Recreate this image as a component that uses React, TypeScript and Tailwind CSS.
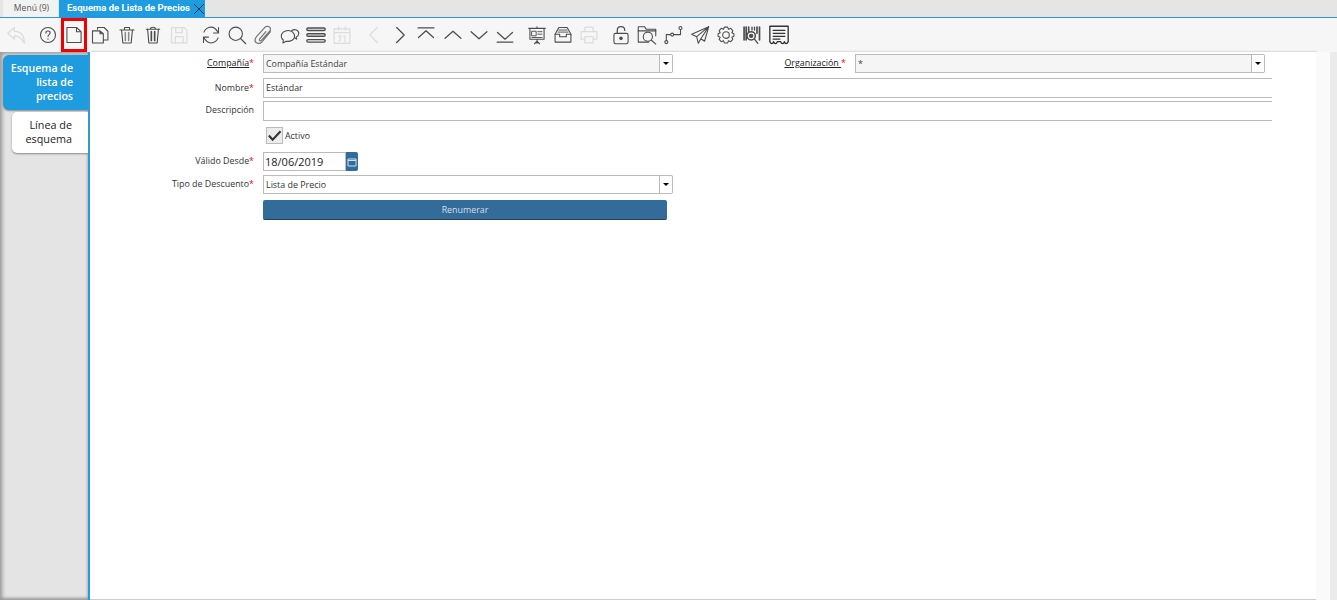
import type { ReactNode } from 'react'

const sans = "font-['Open_Sans',sans-serif]"

function Ico({ children, muted }: { children: ReactNode; muted?: boolean }) {
    return (
        <svg
            viewBox="0 0 24 24"
            className="w-5 h-5"
            fill="none"
            stroke={muted ? '#dcdcdc' : '#4d4d4d'}
            strokeWidth={muted ? 1.5 : 1.3}
            strokeLinecap="round"
            strokeLinejoin="round"
        >
            {children}
        </svg>
    )
}

const toolbar: { icon: ReactNode; muted?: boolean; gap?: boolean; active?: boolean }[] = [
    { muted: true, icon: <path d="M2 10 L10 3 V7.5 C17 7.5 22 12 22 22 C19 16 15 13 10 13 V17 Z" /> },
    { gap: true, icon: <><circle cx="12" cy="12" r="9" /><path d="M9.5 9.5 C9.5 6.5 14.5 6.5 14.5 9.5 C14.5 11.5 12 11.5 12 13.8" /><path d="M12 16.5 V17" /></> },
    { active: true, icon: <path d="M3.5 3 H15 L20.5 8 V21 H3.5 Z M15 3 V8 H20.5" /> },
    { icon: <><path d="M9 5 V3 H17 L21.5 7.5 V18 H16" /><path d="M3 7 H12 L16 10.5 V21.5 H3 Z M12 7 V10.5 H16" /></> },
    { icon: <><path d="M3.5 6 H20.5 M9 6 V3 H15 V6" /><path d="M5.5 6 L7 21.5 H17 L18.5 6" /><path d="M10 9 V18.5 M14 9 V18.5" strokeWidth="1.8" stroke="#888" /></> },
    { icon: <><path d="M4 5 H20 M9 5 C9 2 15 2 15 5" /><path d="M5.5 5 L7 21.5 H17 L18.5 5" /><path d="M10 8 V18.5 M14 8 V18.5" strokeWidth="2" /></> },
    { muted: true, icon: <><path d="M3 3 H18 L21.5 6.5 V21.5 H3 Z" /><path d="M8 3 V9 H16 V3 M7.5 21.5 V14 H17 V21.5" /></> },
    { gap: true, icon: <><path d="M20.5 9 C18.5 5 15 2.5 12 2.5 C8 2.5 4.5 5.5 3.5 8.5" /><path d="M21 3 V9.5 H15" /><path d="M3.5 15 C5.5 19 9 21.5 12 21.5 C16 21.5 19.5 18.5 20.5 15.5" /><path d="M3 21 V14.5 H9" /></> },
    { icon: <><circle cx="10.5" cy="10.5" r="8" /><path d="M16.5 16.5 L22.5 22.5" /></> },
    { icon: <path stroke="#777" strokeWidth="1.5" d="M21 8 L10.5 20.5 C8.5 23 3 22.5 2.5 19 C2.2 17 3 15.5 4 14.3 L14.5 2.5 C16 1 20 1.2 20.8 3.5 C21.3 5.3 20.8 6.5 20 7.5 L10 18.5 C9 19.5 7 18.7 7.8 17 L15.5 8" /> },
    { icon: <><path d="M14 7 C17 4 23 6 22.5 10.5 C22.3 12.5 21 14 19.5 14.5 L20 17 L17 15" /><path d="M10 6.5 C5 6.5 1.5 9.5 1.5 13.5 C1.5 15.5 2.5 17 4 18 L3.5 21.5 L7.5 19.5 C13 20.2 17.5 17.5 17.5 13.5 C17.5 9.5 14 6.5 10 6.5 Z" fill="#f5f5f5" /></> },
    { icon: <path strokeWidth="1.7" d="M1 5 C1 4 1.5 3.5 2.5 3.5 H21.5 C22.5 3.5 23 4 23 5 C23 6 22.5 6.5 21.5 6.5 H2.5 C1.5 6.5 1 6 1 5 Z M1 12 C1 11 1.5 10.5 2.5 10.5 H21.5 C22.5 10.5 23 11 23 12 C23 13 22.5 13.5 21.5 13.5 H2.5 C1.5 13.5 1 13 1 12 Z M1 19 C1 18 1.5 17.5 2.5 17.5 H21.5 C22.5 17.5 23 18 23 19 C23 20 22.5 20.5 21.5 20.5 H2.5 C1.5 20.5 1 20 1 19 Z" /> },
    { muted: true, icon: <><path d="M2.5 4.5 H21.5 V22 H2.5 Z M2.5 9 H21.5 M8 2 V6 M16 2 V6" /><path d="M8 13 H11 L9 16 C11 16 11 20 8 19 M14 14 L15.5 13 V20" strokeWidth="1.3" /></> },
    { gap: true, muted: true, icon: <path d="M16 3 L7 12 L16 21" /> },
    { icon: <path strokeWidth="1.5" d="M8 3 L17 12 L8 21" /> },
    { icon: <path strokeWidth="1.5" d="M2.5 3.5 H21.5 M3 15 L12 7 L21 15" /> },
    { icon: <path strokeWidth="1.5" d="M2.5 16 L12 7.5 L21.5 16" /> },
    { icon: <path strokeWidth="1.5" d="M2.5 8 L12 16.5 L21.5 8" /> },
    { icon: <path strokeWidth="1.5" d="M2.5 20.5 H21.5 M3 9 L12 17 L21 9" /> },
    { gap: true, icon: <><path d="M2 4 H22 M3.5 4 V17 H20.5 V4 M12 2 V4 M12 17 V22 M9 22.5 L12 19.5 L15 22.5" /><path d="M6 7.5 H11 V13 H6 Z M13 8 H18 M13 11 H18 M6 15 H18" strokeWidth="1.1" /></> },
    { icon: <><path d="M7 3 H17 L21.5 11 V20.5 H2.5 V11 Z" /><path d="M2.5 11 H8 V14 H16 V11 H21.5" /><path d="M7 6 H17 M6 8.5 H18" strokeWidth="1.1" /></> },
    { muted: true, icon: <><path d="M7 8 V2.5 H17 V8 M7 17 H2.5 V8 H21.5 V17 H17" /><path d="M7 14 H17 V21.5 H7 Z" /></> },
    { gap: true, icon: <><rect x="3.5" y="10" width="17" height="12.5" rx="2" /><path d="M7.5 10 V6.5 C7.5 0.5 16.5 0.5 16.5 6.5" strokeWidth="1.5" /><circle cx="12" cy="16" r="1.5" fill="#4d4d4d" /></> },
    { icon: <><path d="M14 20.5 H1.5 V2 H9 L11 5 H22.5 V13" /><path d="M1.5 7 H22.5" /><circle cx="13" cy="14" r="5.5" /><path d="M17 18 L22.5 23" /></> },
    { icon: <><circle cx="4" cy="20.5" r="1.8" /><circle cx="11" cy="11.5" r="1.8" /><circle cx="21" cy="3.5" r="1.8" /><path d="M4 18.5 V11.5 H9 M13 11.5 H21 V5.5" /></> },
    { icon: <path d="M22.5 2 L2 11 L8 14 L10 22 L13 16.5 L17.5 19.5 Z M22.5 2 L8 14 M22.5 2 L13 16.5" /> },
    { icon: <><circle cx="12" cy="12" r="4" /><path d="M10 2.5 H14 L15 5.2 L17.7 4 L20.2 6.8 L19 9.3 L21.5 10.5 V13.5 L19 14.7 L20.2 17.2 L17.7 20 L15 18.8 L14 21.5 H10 L9 18.8 L6.3 20 L3.8 17.2 L5 14.7 L2.5 13.5 V10.5 L5 9.3 L3.8 6.8 L6.3 4 L9 5.2 Z" /></> },
    { icon: <><path d="M2.5 2.5 V18 M5 2.5 V18 M8 2.5 V8 M18 2.5 V10 M21 2.5 V18" strokeWidth="2" /><path d="M12 2.5 V6 M15 2.5 V6" strokeWidth="1.6" /><circle cx="11" cy="13" r="5" strokeWidth="1.8" fill="#f5f5f5" /><circle cx="11" cy="13" r="2" fill="#4d4d4d" /><path d="M15 17 L19 22" strokeWidth="1.6" /></> },
    { icon: <><path strokeWidth="1.6" stroke="#333" d="M1 1.5 H23 V20 C21.5 23 19.5 23 18.5 20 C17.5 23 15 23 14 20 H10 C9 23 6.5 23 5.5 20 C4.5 23 2.5 23 1 20 Z" /><path stroke="#333" strokeWidth="1.5" d="M5 6.5 H19 M5 10 H19 M5 13.5 H19 M5 17 H13" /></> },
]

function Req() {
    return <span className="text-[#e0101a]">*</span>
}

function Label({ children }: { children: ReactNode }) {
    return <div className="w-[164px] shrink-0 text-right whitespace-nowrap text-[8.9px] text-[#333] leading-none">{children}</div>
}

function Combo({ value }: { value: string }) {
    return (
        <div className="flex h-[19px] w-[410px] shrink-0">
            <div className="flex-1 bg-[#f5f5f5] border border-[#bbbbbb] pl-[2px] text-[8.9px] leading-[17px] text-[#444]">{value}</div>
            <div className="w-[13px] border border-l-0 border-[#bbbbbb] rounded-r-[2px] bg-white flex items-center justify-center">
                <div className="w-0 h-0 border-x-[3px] border-x-transparent border-t-[3px] border-t-black" />
            </div>
        </div>
    )
}

export default function App() {
    return (
        <div className={`${sans} h-[600px] w-[1337px] overflow-hidden bg-white flex flex-col`}>
            {/* Tabs */}
            <div className="h-[18px] shrink-0 bg-[#e5e5e5] border-b border-[#2f95d0] flex items-stretch pl-[3px]">
                <div className="w-[55px] bg-[#f2f2f2] text-[#555] text-[8.6px] leading-[17px] text-center pl-[2px]">Menú (9)</div>
                <div className="ml-[1px] w-[146px] bg-[#1f9be0] flex items-center pl-[8px] text-white font-['Roboto',sans-serif] font-bold text-[9.5px]">
                    <span className="w-[126px] whitespace-nowrap">Esquema de Lista de Precios</span>
                    <svg viewBox="0 0 12 12" className="w-[12px] h-[12px]" stroke="#163a52" strokeWidth="1" fill="none">
                        <path d="M1 1 L11 11 M11 1 L1 11" />
                    </svg>
                </div>
            </div>

            {/* Toolbar */}
            <div className="h-[34px] shrink-0 bg-[#f6f6f6] flex items-stretch pl-[3px]">
                {toolbar.map((b, i) => (
                    <div
                        key={i}
                        className={`w-[26.35px] shrink-0 flex items-center justify-center ${b.gap ? 'ml-[5px]' : ''} ${b.active ? 'border-[3px] border-[#f00000]' : ''}`}
                    >
                        <Ico muted={b.muted}>{b.icon}</Ico>
                    </div>
                ))}
            </div>

            <div className="flex-1 flex min-h-0">
                {/* Side tabs */}
                <div className="w-[90px] shrink-0 bg-[#e4e4e4] border-r-2 border-[#1f9be0] shadow-[inset_2px_2px_4px_#999,inset_0_-2px_3px_#999] pt-[3px] flex flex-col items-end">
                    <div className="w-[85px] h-[55px] bg-[#1f9be0] rounded-l-[6px] pr-[15px] pt-[6px] text-right text-white text-[10.6px] font-semibold leading-[14px] shadow-[0_1px_2px_#888]">
                        Esquema de<br />lista de<br />precios
                    </div>
                    <div className="mt-[2px] w-[76px] h-[41px] bg-white rounded-l-[5px] pr-[16px] pt-[6px] text-right text-[#222] text-[10.8px] leading-[14px] shadow-[0_1px_2px_#888]">
                        Línea de<br />esquema
                    </div>
                </div>

                {/* Form panel */}
                <div className="w-[1226px] shrink-0 bg-white border-b border-[#ccc] shadow-[1px_0_2px_#aaa] pt-[2px] overflow-hidden">
                    <div className="flex items-center h-[19px]">
                        <Label><span className="underline text-[#222]">Compañía</span><Req /></Label>
                        <div className="w-[9px] shrink-0" />
                        <Combo value="Compañía Estándar" />
                        <div className="w-[9px] shrink-0" />
                        <Label><span className="underline text-[#222]">Organización&nbsp;</span><Req /></Label>
                        <div className="w-[9px] shrink-0" />
                        <Combo value="*" />
                    </div>

                    <div className="flex items-center mt-[5px] h-[20px]">
                        <Label>Nombre<Req /></Label>
                        <div className="w-[9px] shrink-0" />
                        <div className="w-[1009px] h-full border border-r-0 border-[#bbbbbb] pl-[2px] text-[8.9px] leading-[18px] text-[#333]">Estándar</div>
                    </div>

                    <div className="flex items-center mt-[3px] h-[20px]">
                        <Label><span className="relative bottom-[1px]">Descripción</span></Label>
                        <div className="w-[9px] shrink-0" />
                        <div className="w-[1009px] h-full border border-r-0 border-[#bbbbbb]" />
                    </div>

                    <div className="flex items-center mt-[5px] h-[18px] pl-[176px]">
                        <div className="w-[17px] h-[17px] bg-[#ececec] border border-[#bbb] flex items-center justify-center">
                            <svg viewBox="0 0 16 16" className="w-[15px] h-[15px]" fill="none" stroke="#333" strokeWidth="2.2">
                                <path d="M2 8 L6 12.5 L14.5 3.5" />
                            </svg>
                        </div>
                        <span className="ml-[2px] text-[8.9px] text-[#333] pt-[1px]">Activo</span>
                    </div>

                    <div className="flex items-center mt-[8px] h-[19px]">
                        <Label>Válido Desde<Req /></Label>
                        <div className="w-[9px] shrink-0" />
                        <div className="w-[83px] h-full border border-[#bbbbbb] pl-[1px] text-[11px] leading-[17px] text-[#222]">18/06/2019</div>
                        <div className="w-[12px] h-full bg-[#336b9b] rounded-r-[2px] flex items-center justify-center">
                            <svg viewBox="0 0 10 10" className="w-[10px] h-[10px]" fill="none" stroke="#cfe0ee" strokeWidth="1">
                                <path d="M1 2 H9 V9 H1 Z M1 3.5 H9" />
                            </svg>
                        </div>
                    </div>

                    <div className="flex items-center mt-[4px] h-[19px]">
                        <Label>Tipo de Descuento<Req /></Label>
                        <div className="w-[9px] shrink-0" />
                        <div className="flex h-full w-[410px]">
                            <div className="flex-1 border border-[#bbbbbb] pl-[2px] text-[8.9px] leading-[17px] text-[#333]">Lista de Precio</div>
                            <div className="w-[13px] border border-l-0 border-[#bbbbbb] rounded-r-[2px] bg-white flex items-center justify-center">
                                <div className="w-0 h-0 border-x-[3px] border-x-transparent border-t-[3px] border-t-black" />
                            </div>
                        </div>
                    </div>

                    <div className="mt-[6px] ml-[173px] w-[404px] h-[20px] bg-[#336b9b] rounded-[2px] border-b border-[#2a3f50] text-center text-[8.9px] leading-[19px] text-[#d5dfe8]">
                        Renumerar
                    </div>
                </div>

                <div className="w-[14px] shrink-0 bg-[#fafafa]" />
                <div className="flex-1 bg-[#ebebeb]" />
            </div>
        </div>
    )
}
